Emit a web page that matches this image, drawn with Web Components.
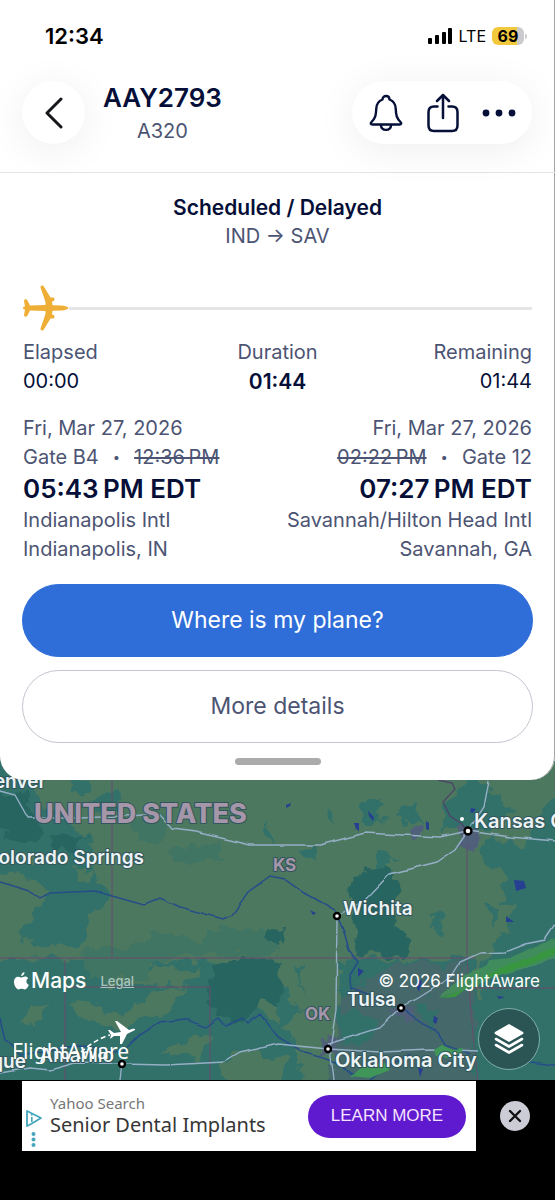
<!DOCTYPE html>
<html lang="en">
<head>
<meta charset="utf-8">
<meta name="viewport" content="width=device-width, initial-scale=1">
<title>AAY2793</title>
<style>
    html {
        --ink: #050f38;
        --muted: #4c5473;
        --blue: #2f6dd8;
        --line: #e5e5e5;
    }
    body {
        margin: 0;
        background: #000;
        color: var(--muted);
        font: 20px/29px Inter, "Liberation Sans", sans-serif;
    }
</style>
</head>
<body>
<flight-app>
    <flight-sheet slot="sheet">
        <status-bar time="12:34" network="LTE" battery="69"></status-bar>
        <top-bar>
            <span slot="title">AAY2793</span>
            <span slot="subtitle">A320</span>
        </top-bar>
        <flight-status>
            <span slot="state">Scheduled / Delayed</span>
            IND → SAV
        </flight-status>
        <flight-progress elapsed="00:00" duration="01:44" remaining="01:44"></flight-progress>
        <flight-ends>
            <flight-end date="Fri, Mar 27, 2026" gate="Gate B4" planned="12:36&#8201;PM" actual="05:43&#8201;PM EDT"
                        airport="Indianapolis Intl" city="Indianapolis, IN"></flight-end>
            <flight-end class="_arrival" date="Fri, Mar 27, 2026" gate="Gate 12" planned="02:22&#8201;PM" actual="07:27&#8201;PM EDT"
                        airport="Savannah/Hilton Head Intl" city="Savannah, GA"></flight-end>
        </flight-ends>
        <pill-button class="_primary">Where is my plane?</pill-button>
        <pill-button>More details</pill-button>
    </flight-sheet>
    <flight-map slot="map"></flight-map>
    <ad-banner slot="ad">
        <span slot="source">Yahoo Search</span>
        <span slot="headline">Senior Dental Implants</span>
        <span slot="action">LEARN MORE</span>
    </ad-banner>
</flight-app>

<script>
// common base: attach the shadow and put the template in
class BaseElement extends HTMLElement {
    constructor() {
        super();
        this.attachShadow({mode: "open"});
    }

    connectedCallback() {
        this.shadowRoot.innerHTML = this._template();
    }

    _attr(name) {
        return this.getAttribute(name) || "";
    }
}

class FlightApp extends BaseElement {
    _template() {
        return `
            <style>
                :host {
                    display: flex;
                    flex-direction: column;
                    min-height: 100vh;
                }
                ::slotted([slot="map"]) {
                    flex: 1;
                }
            </style>
            <slot name="sheet"></slot>
            <slot name="map"></slot>
            <slot name="ad"></slot>
        `;
    }
}

class FlightSheet extends BaseElement {
    _template() {
        return `
            <style>
                :host {
                    display: flex;
                    flex-direction: column;
                    position: relative;
                    z-index: 1;
                    background: #fff;
                    border-radius: 0 0 24px 24px;
                    box-shadow: inset -1px 0 #a5a5a5;
                    overflow: hidden;
                }
                .handle {
                    align-self: center;
                    width: 86px;
                    height: 7px;
                    margin: 15px 0;
                    border-radius: 4px;
                    background: #ababab;
                }
            </style>
            <slot></slot>
            <div class="handle"></div>
        `;
    }
}

class StatusBar extends BaseElement {
    _template() {
        return `
            <style>
                :host {
                    display: flex;
                    align-items: center;
                    justify-content: space-between;
                    height: 72px;
                    padding: 0 28px 0 45px;
                    color: #000;
                    font-size: 22px;
                    font-weight: 600;
                    line-height: 24px;
                }
                .right {
                    display: flex;
                    align-items: center;
                    gap: 6px;
                    font-size: 16px;
                    font-weight: 400;
                }
                .battery {
                    display: flex;
                    align-items: center;
                    gap: 1px;
                }
                .level {
                    width: 32px;
                    border-radius: 6px;
                    background: linear-gradient(90deg, #f2c93d 79%, #cbcace 79%);
                    font-weight: 700;
                    line-height: 18px;
                    text-align: center;
                }
                .tip {
                    width: 2px;
                    height: 5px;
                    border-radius: 0 2px 2px 0;
                    background: #cbcace;
                }
            </style>
            <span>${this._attr("time")}</span>
            <div class="right">
                <svg width="25" height="16" viewBox="0 0 25 16">
                    <rect x="0" y="10" width="4" height="6" rx="1"/>
                    <rect x="7" y="7" width="4" height="9" rx="1"/>
                    <rect x="14" y="4" width="4" height="12" rx="1"/>
                    <rect x="20" y="0" width="4" height="16" rx="1"/>
                </svg>
                <span>${this._attr("network")}</span>
                <div class="battery">
                    <div class="level">${this._attr("battery")}</div>
                    <div class="tip"></div>
                </div>
            </div>
        `;
    }
}

class TopBar extends BaseElement {
    _template() {
        return `
            <style>
                :host {
                    display: flex;
                    align-items: flex-start;
                    gap: 18px;
                    height: 91px;
                    padding: 9px 23px 0 22px;
                    border-bottom: 1px solid var(--line);
                }
                button {
                    display: grid;
                    place-items: center;
                    padding: 0;
                    border: 0;
                    background: none;
                    color: var(--ink);
                }
                .back, .actions {
                    height: 63px;
                    border-radius: 32px;
                    background: #fff;
                    box-shadow: 0 6px 40px rgba(0, 0, 0, .07);
                }
                .back {
                    width: 63px;
                    color: #16171b;
                }
                .names {
                    flex: 1;
                }
                .block {
                    display: inline-flex;
                    flex-direction: column;
                    align-items: center;
                }
                .title {
                    color: var(--ink);
                    font-size: 26px;
                    font-weight: 600;
                    line-height: 34px;
                }
                .subtitle {
                    line-height: 32px;
                }
                .actions {
                    display: flex;
                    align-items: center;
                    justify-content: space-between;
                    width: 148px;
                    padding: 0 16px;
                }
            </style>
            <button class="back" aria-label="Back">
                <svg width="20" height="32" viewBox="0 0 20 32" fill="none" stroke="currentColor" stroke-width="3" stroke-linecap="round" stroke-linejoin="round">
                    <path d="M17 2 L3 16 L17 30"/>
                </svg>
            </button>
            <div class="names">
                <div class="block">
                    <div class="title"><slot name="title"></slot></div>
                    <div class="subtitle"><slot name="subtitle"></slot></div>
                </div>
            </div>
            <div class="actions">
                <button aria-label="Alerts">
                    <svg width="36" height="38" viewBox="0 0 36 38" fill="none" stroke="currentColor" stroke-width="2.4" stroke-linejoin="round">
                        <path d="M14.5 5.5 C14.5 .8 21.5 .8 21.5 5.5 C25.5 7 27.5 10.2 27.7 14.5 C28 21.5 28.6 24 32.5 28 C33.8 29.4 33.3 30.5 31.5 30.5 L4.5 30.5 C2.7 30.5 2.2 29.4 3.5 28 C7.4 24 8 21.5 8.3 14.5 C8.5 10.2 10.500 7 14.5 5.5 Z"/>
                        <path d="M12.8 30.8 C13.5 37.5 22.5 37.5 23.2 30.8"/>
                    </svg>
                </button>
                <button aria-label="Share">
                    <svg width="34" height="40" viewBox="0 0 34 40" fill="none" stroke="currentColor" stroke-width="2.5" stroke-linecap="round" stroke-linejoin="round">
                        <path d="M11.5 13.5 H8 C4.5 13.5 2.5 15.5 2.5 19 V32.5 C2.5 36 4.5 38 8 38 H26 C29.5 38 31.5 36 31.5 32.5 V19 C31.5 15.5 29.5 13.5 26 13.5 H22.5"/>
                        <path d="M17 25 V2 M11 8 L17 2 L23 8"/>
                    </svg>
                </button>
                <button aria-label="More">
                    <svg width="34" height="8" viewBox="0 0 34 8" fill="currentColor">
                        <circle cx="4" cy="4" r="3.4"/><circle cx="17" cy="4" r="3.4"/><circle cx="30" cy="4" r="3.4"/>
                    </svg>
                </button>
            </div>
        `;
    }
}

class FlightStatus extends BaseElement {
    _template() {
        return `
            <style>
                :host {
                    display: block;
                    padding-top: 20px;
                    text-align: center;
                }
                .state {
                    color: var(--ink);
                    font-size: 21px;
                    font-weight: 600;
                }
            </style>
            <div class="state"><slot name="state"></slot></div>
            <slot></slot>
        `;
    }
}

class FlightProgress extends BaseElement {
    _template() {
        return `
            <style>
                :host {
                    display: block;
                    padding: 34px 23px 0;
                }
                .track {
                    display: flex;
                    align-items: center;
                }
                .rail {
                    flex: 1;
                    height: 3px;
                    background: var(--line);
                }
                dl {
                    display: grid;
                    grid-template-columns: 1fr 1fr 1fr;
                    margin: 7px 0 0;
                }
                dl div:nth-child(2) {
                    text-align: center;
                }
                dl div:nth-child(3) {
                    text-align: right;
                }
                dd {
                    margin: 0;
                    color: var(--ink);
                }
                dl div:nth-child(2) dd {
                    font-size: 21px;
                    font-weight: 600;
                }
            </style>
            <div class="track">
                <svg width="46" height="46" viewBox="0 0 46 46" fill="#efae35">
                    <path d="M0 23 C0 22 1 21.5 2 21.5 L1 16 C1 14 3.5 14 4.2 15 L7 20.5 L22.5 20 L22.500 17 L17.5 2.5 C17.5 0 20 0 20.800 1.5 L27.500 12.500 H30.5 C32 13 32 15.500 30.500 16 L29 16.500 L29.500 20.200 L38 20.4 C42 20.6 45.5 22 45.5 23 C45.5 24 42 25.4 38 25.6 L29.500 25.800 L29 29.500 L30.500 30 C32 30.500 32 33 30.500 33.500 H27.500 L20.800 44.500 C20 46 17.5 46 17.5 43.5 L22.5 29 L22.5 26 L7 25.5 L4.2 31 C3.5 32 1 32 1 30 L2 24.5 C1 24.5 0 24 0 23 Z"/>
                </svg>
                <div class="rail"></div>
            </div>
            <dl>
                <div><dt>Elapsed</dt><dd>${this._attr("elapsed")}</dd></div>
                <div><dt>Duration</dt><dd>${this._attr("duration")}</dd></div>
                <div><dt>Remaining</dt><dd>${this._attr("remaining")}</dd></div>
            </dl>
        `;
    }
}

class FlightEnds extends BaseElement {
    _template() {
        return `
            <style>
                :host {
                    display: flex;
                    justify-content: space-between;
                    padding: 18px 23px 7px;
                }
            </style>
            <slot></slot>
        `;
    }
}

class FlightEnd extends BaseElement {
    _template() {
        return `
            <style>
                :host {
                    display: block;
                    white-space: nowrap;
                }
                :host(._arrival) {
                    text-align: right;
                }
                .gate {
                    display: flex;
                    gap: 14px;
                }
                :host(._arrival) .gate {
                    flex-direction: row-reverse;
                }
                .dot {
                    font-size: 13px;
                }
                .actual {
                    color: var(--ink);
                    font-size: 26px;
                    font-weight: 600;
                    line-height: 34px;
                }
            </style>
            <div>${this._attr("date")}</div>
            <div class="gate">
                <span>${this._attr("gate")}</span>
                <span class="dot">•</span>
                <s>${this._attr("planned")}</s>
            </div>
            <div class="actual">${this._attr("actual")}</div>
            <div>${this._attr("airport")}</div>
            <div>${this._attr("city")}</div>
        `;
    }
}

class PillButton extends BaseElement {
    _template() {
        return `
            <style>
                :host {
                    display: block;
                    margin: 13px 22px 0;
                }
                button {
                    display: block;
                    width: 100%;
                    height: 73px;
                    border: 1px solid #c3c5cf;
                    border-radius: 37px;
                    background: #fff;
                    color: var(--muted);
                    font: 23px/29px Inter, "Liberation Sans", sans-serif;
                }
                :host(._primary) button {
                    border-color: var(--blue);
                    background: var(--blue);
                    color: #fff;
                }
            </style>
            <button><slot></slot></button>
        `;
    }
}

class FlightMap extends BaseElement {
    _template() {
        return `
            <style>
                :host {
                    display: grid;
                    position: relative;
                    min-height: 340px;
                    margin-top: -40px;
                    background: #4d7860;
                }
                .terrain {
                    position: absolute;
                    width: 100%;
                    height: 100%;
                }
                .over {
                    display: flex;
                    flex-direction: column;
                    justify-content: flex-end;
                    gap: 15px;
                    position: relative;
                    padding: 0 15px 10px 14px;
                    color: #fff;
                }
                .row {
                    display: flex;
                    align-items: center;
                    justify-content: space-between;
                    line-height: 24px;
                }
                .maps {
                    display: flex;
                    align-items: center;
                    gap: 2px;
                    font-size: 21px;
                    font-weight: 500;
                }
                a {
                    margin-left: 12px;
                    color: #a9c6bf;
                    font-size: 13px;
                    font-weight: 500;
                }
                .copy {
                    font-size: 17px;
                }
                .brand {
                    align-self: flex-start;
                }
                button {
                    display: grid;
                    place-items: center;
                    width: 62px;
                    height: 62px;
                    border: 1px solid #7fb0a8;
                    border-radius: 50%;
                    background: #2b5555;
                    color: #fff;
                }
            </style>
            <svg class="terrain" viewBox="0 740 555 340" preserveAspectRatio="xMidYMid slice">
                <defs>
                    <filter id="rough" x="-5%" y="-5%" width="110%" height="110%">
                        <feTurbulence type="fractalNoise" baseFrequency=".06" numOctaves="3" seed="4"/>
                        <feDisplacementMap in="SourceGraphic" scale="22" xChannelSelector="R" yChannelSelector="G"/>
                    </filter>
                    <filter id="bend">
                        <feTurbulence type="fractalNoise" baseFrequency=".05" numOctaves="1" seed="7"/>
                        <feDisplacementMap in="SourceGraphic" scale="4" xChannelSelector="R" yChannelSelector="G"/>
                    </filter>
                </defs>
                <!-- land cover -->
                <g filter="url(#rough)">
                    <path fill="#31706a" d="M-20 730 L0 760 L30 790 L60 815 L88 840 L95 880 L112 895 L90 915 L88 940 L60 945 L20 940 L30 920 L50 890 L30 880 L-20 870 Z"/>
                    <path fill="#4d7860" d="M-5 870 L20 875 L25 900 L18 950 L-20 950 Z M20 850 L40 858 L28 868 Z M70 870 L92 868 L88 885 Z M28 822 L38 826 L32 832 Z"/>
                    <path fill="#286561" d="M0 790 L25 795 L45 830 L35 845 L10 840 L-10 815 Z M50 835 L85 838 L80 850 L55 850 Z"/>
                    <path fill="#31706a" d="M72 783 L90 780 L86 797 L72 795 Z M85 802 L118 794 L120 808 L100 815 Z"/>
                    <path fill="#31706a" d="M-20 962 L120 958 L215 962 L230 990 L290 1030 L310 1100 L-20 1100 Z"/>
                    <path fill="#4d7860" d="M70 1000 L100 1005 L110 1015 L160 990 L190 985 L170 1010 L140 1022 L110 1030 L80 1020 Z M30 1005 L45 1008 L35 1025 L20 1028 Z M180 1040 L215 1035 L200 1060 L160 1055 Z M90 965 L200 968 L180 985 L110 985 Z M230 1050 L290 1060 L270 1090 L220 1080 Z"/>
                    <path fill="#3f7564" d="M150 930 L190 940 L240 925 L280 935 L280 955 L150 958 Z M80 950 L150 945 L150 980 L90 975 Z M130 820 L170 815 L165 835 L140 840 Z M170 850 L220 845 L225 860 L180 862 Z"/>
                    <path fill="#286561" d="M210 965 L255 955 L290 965 L290 1010 L265 1000 L245 1020 L215 1015 Z M265 930 L285 930 L282 948 L268 945 Z"/>
                    <path fill="#4d7860" d="M280 960 L335 960 L335 1060 L300 1040 L282 1000 Z"/>
                    <path fill="#286561" d="M355 870 L385 862 L400 880 L390 910 L412 945 L405 957 L360 955 L358 930 L350 905 Z"/>
                    <path fill="#31706a" d="M470 780 L500 795 L510 815 L480 830 L440 830 L445 805 Z M363 802 L385 802 L380 825 L362 825 Z M395 812 L415 805 L425 825 L405 820 Z M325 810 L332 806 L333 828 L327 822 Z M375 850 L395 855 L385 870 L372 865 Z M475 855 L490 835 L520 850 L535 820 L555 800 L575 810 L575 1090 L500 1090 L475 970 L495 950 L500 930 L485 905 L490 880 Z M500 850 L570 840 L575 960 L505 950 Z M340 960 L475 958 L475 1000 L340 1000 Z M260 830 L270 822 L272 848 L264 842 Z M278 985 L300 1010 L280 1030 Z M295 965 L302 970 L300 990 Z M435 912 L445 918 L440 932 L430 925 Z M300 850 L318 846 L315 860 L302 858 Z"/>
                    <path fill="#4d7860" d="M480 860 L505 870 L500 910 L480 900 Z M500 905 L515 900 L510 940 L495 930 Z M520 790 L545 800 L530 825 L510 815 Z"/>
                    <path fill="#44686a" d="M340 1000 L400 960 L470 965 L475 1090 L330 1090 Z"/>
                    <path fill="#31706a" d="M340 1010 L380 1020 L360 1045 L340 1040 Z M415 1000 L445 1010 L430 1030 Z M470 1000 L555 1000 L560 1090 L475 1090 Z"/>
                    <path fill="#51607a" d="M462 825 L478 826 L482 840 L470 850 L458 846 Z M411 826 L422 826 L424 835 L412 838 Z M398 1005 L415 1008 L408 1020 L395 1014 Z M322 1035 L340 1040 L338 1060 L322 1055 Z"/>
                </g>
                <!-- state lines -->
                <g fill="none" stroke="#654f6d" stroke-opacity=".8" stroke-width="1.3">
                    <path d="M112 740 V958 M0 958 H475 M65 960 V1080 M65 987 H210 V1080 M467 845 V958 L470 1000 L474 1045 L478 1080 M470 988 H555"/>
                    <path d="M438 780 L452 783 L455 789 L443 802 L450 816 L462 824 L467 831" stroke-opacity="1" stroke="#4d4468"/>
                </g>
                <!-- rivers and lakes -->
                <g fill="none" stroke="#254e88" stroke-width="1.5" filter="url(#bend)">
                    <path d="M0 882 L30 891 L40 898 L50 893 L95 891 L112 896 L144 905 L160 898 L180 907 L223 919 L232 915 L248 892 L270 876 L285 879 L305 893 L335 910 L345 935 L349 950 L358 962 L350 975 L352 988 L370 995 L400 1008 L420 1022 L436 1030 L445 1045 L470 1055"/>
                    <path d="M0 1018 L5 1040 L20 1055 L80 1045 L122 1052 L140 1035 L160 1022 L185 1019 L205 1027 L218 1018 L225 1026 L243 1018 L248 1024 L260 1014 L278 1037 L305 1053 L330 1060 L355 1075"/>
                    <path d="M410 1055 L390 1065 L370 1080 M515 1050 L530 1062 L555 1065"/>
                </g>
                <g fill="#263f91">
                    <path d="M286 805 l5 -2 l-1 3 l-4 2 z M354 823 l5 0 l0 8 l-3 -2 z M368 811 l6 6 l-1 4 l-4 -5 z M426 821 l3 2 l0 7 l-3 -1 z M471 808 l5 1 l-3 4 l-3 -1 z M514 880 l10 1 l2 7 l-10 3 z M506 916 l8 6 l-8 0 z M310 910 l6 3 l-3 2 z M358 968 l6 3 l-6 6 z M434 1016 l4 2 l-2 6 l-3 -2 z M418 979 l4 2 l-3 11 l-2 -4 z M418 1067 l5 2 l-3 8 z M497 996 l8 1 l-6 2 z"/>
                </g>
                <!-- roads -->
                <g fill="none" stroke="#94aec6" stroke-width="1.4" filter="url(#bend)">
                    <path d="M0 791 L15 795 L28 818 L80 818 L145 815 L160 815 L173 829 L195 832 L230 840 L250 845 L320 845 L365 833 L440 837 L468 831 L510 837 L555 841"/>
                    <path d="M489 780 L484 807 L468 831 L455 850 L437 862 L390 874 L365 900 L337 916 L336 1010 L330 1049 L334 1080"/>
                    <path d="M0 1073 L30 1068 L50 1070 L75 1063 L122 1064 L165 1065 L225 1062 L240 1053 L278 1044 L328 1049 L380 1052 L430 1050 L478 1052"/>
                    <path d="M328 1044 L380 1028 L401 1008 L420 997 L450 978 L460 962 L480 953 L505 952 L525 944 L545 940 L555 925 M122 1064 L120 1080"/>
                </g>
                <!-- radar echo -->
                <g filter="url(#bend)">
                    <path fill="#439358" fill-opacity=".8" d="M438 998 L450 988 L465 975 L488 965 L490 960 L510 958 L530 948 L558 938 V958 L520 970 L500 975 L470 988 Z"/>
                    <path fill="#37963f" d="M478 980 L505 966 L530 957 L558 946 V953 L525 966 L500 974 Z M440 998 L460 991 L475 982 L455 997 Z"/>
                    <path fill="#3f9558" d="M350 1076 L360 1068 L385 1062 L390 1070 L370 1078 Z M434 1050 L442 1045 L452 1050 L462 1049 L458 1058 L436 1056 Z"/>
                </g>
                <!-- labels -->
                <g font-family='Inter, "Liberation Sans", sans-serif' paint-order="stroke" stroke="#31555c" stroke-width="2" stroke-linejoin="round">
                    <g fill="#a596aa" font-weight="800">
                        <text x="34" y="823" font-size="27">UNITED STATES</text>
                        <g font-size="17" font-weight="700">
                            <text x="273" y="871">KS</text>
                            <text x="305" y="1020">OK</text>
                        </g>
                    </g>
                    <g fill="#ebf3f5" font-size="19" font-weight="600">
                        <text x="46" y="788" text-anchor="end">Denver</text>
                        <text x="144" y="864" text-anchor="end">Colorado Springs</text>
                        <text x="343" y="915">Wichita</text>
                        <text x="474" y="828" font-size="20">Kansas City</text>
                        <text x="347" y="1006">Tulsa</text>
                        <text x="335" y="1067" font-size="20">Oklahoma City</text>
                        <text x="114" y="1062" text-anchor="end" font-weight="500">Amarillo</text>
                        <text x="26" y="1068" text-anchor="end">Albuquerque</text>
                    </g>
                </g>
                <g fill="#fff" stroke="#000" stroke-width="2.4">
                    <circle cx="468" cy="831" r="3.5"/>
                    <circle cx="337" cy="916" r="3"/>
                    <circle cx="401" cy="1008" r="3"/>
                    <circle cx="328" cy="1049" r="3"/>
                    <circle cx="122" cy="1064" r="3"/>
                    <circle cx="462" cy="819" r="2" stroke="none"/>
                </g>
            </svg>
            <div class="over">
                <div class="row">
                    <div class="maps">
                        <svg width="15" height="18" viewBox="0 0 15 18" fill="#fff">
                            <path d="M10.5 0 C10.7 2 9 4 7.2 4 C7 2.2 8.7 .3 10.5 0 Z M14.2 6.2 C11.5 8 12 11.5 14.8 12.7 C14 15 12.5 17.5 10.8 17.5 C9.5 17.5 9 16.8 7.7 16.8 C6.3 16.8 5.8 17.5 4.6 17.5 C2.5 17.5 0 13.5 0 10 C0 6.5 2.2 4.7 4.3 4.7 C5.7 4.7 6.8 5.6 7.6 5.6 C8.4 5.6 9.6 4.6 11.2 4.6 C12.3 4.6 13.5 5.2 14.2 6.2 Z"/>
                        </svg>
                        <span>Maps</span>
                        <a href="#legal">Legal</a>
                    </div>
                    <span class="copy">© 2026 FlightAware</span>
                </div>
                <div class="row">
                    <svg class="brand" width="124" height="60" viewBox="0 0 124 60" fill="#fff">
                        <path d="M67 44 C76 36 86 30 96 27" fill="none" stroke="#fff" stroke-width="1.6" stroke-dasharray="5 3"/>
                        <path d="M94 22 L96 22 L100 25 L107 24 L101 13 L103 13 L115 22 L118 21 C122 20 122 22 119 23 L113 26 L108 36 L106 36 L106 28 L100 28 L96 31 L97 27 Z"/>
                        <text x="-2" y="51" font-family='"Noto Sans", sans-serif' font-size="21">FlightAware</text>
                    </svg>
                    <button aria-label="Map layers">
                        <svg width="30" height="32" viewBox="0 0 30 32" fill="currentColor">
                            <path d="M15 1 L29 9 Q30 10 29 11 L15 19 L1 11 Q0 10 1 9 Z"/>
                            <path d="M2 16 L15 23.5 L28 16 M2 22 L15 29.5 L28 22" fill="none" stroke="currentColor" stroke-width="2.6" stroke-linecap="round" stroke-linejoin="round"/>
                        </svg>
                    </button>
                </div>
            </div>
        `;
    }
}

class AdBanner extends BaseElement {
    _template() {
        return `
            <style>
                :host {
                    display: flex;
                    align-items: flex-start;
                    gap: 24px;
                    height: 119px;
                    padding: 1px 25px 0 22px;
                    background: #000;
                }
                .card {
                    display: flex;
                    flex: 1;
                    align-items: center;
                    gap: 7px;
                    height: 70px;
                    padding: 0 10px 0 3px;
                    background: #fff;
                    font-family: "Noto Sans", "Open Sans", sans-serif;
                }
                .choices {
                    align-self: flex-end;
                }
                .text {
                    flex: 1;
                    padding-bottom: 4px;
                    line-height: 22px;
                }
                .source {
                    color: #767676;
                    font-size: 15px;
                }
                .headline {
                    color: #363636;
                }
                .go {
                    width: 158px;
                    height: 43px;
                    padding: 0;
                    border: 0;
                    border-radius: 22px;
                    background: #5f19cf;
                    color: #f6e3ff;
                    font: 17px/22px "Liberation Sans", sans-serif;
                }
                .close {
                    display: grid;
                    place-items: center;
                    width: 30px;
                    height: 30px;
                    margin-top: 20px;
                    padding: 0;
                    border: 0;
                    border-radius: 50%;
                    background: #cbccd6;
                }
            </style>
            <div class="card">
                <svg class="choices" width="18" height="42" viewBox="0 0 18 42" fill="#45a5bd">
                    <path d="M2 2 L16 9 L6 15 L2 17 Z" fill="none" stroke="#45a5bd" stroke-width="1.8" stroke-linejoin="round"/>
                    <rect x="6" y="8" width="1.6" height="5"/>
                    <rect x="6" y="5" width="1.6" height="1.6"/>
                    <circle cx="8.5" cy="25" r="2"/><circle cx="8.5" cy="30.5" r="2"/><circle cx="8.5" cy="36" r="2"/>
                </svg>
                <div class="text">
                    <div class="source"><slot name="source"></slot></div>
                    <div class="headline"><slot name="headline"></slot></div>
                </div>
                <button class="go"><slot name="action"></slot></button>
            </div>
            <button class="close" aria-label="Close ad">
                <svg width="14" height="14" viewBox="0 0 14 14" stroke="#111" stroke-width="2.4" stroke-linecap="round">
                    <path d="M2 2 L12 12 M12 2 L2 12"/>
                </svg>
            </button>
        `;
    }
}

customElements.define("flight-app", FlightApp);
customElements.define("flight-sheet", FlightSheet);
customElements.define("status-bar", StatusBar);
customElements.define("top-bar", TopBar);
customElements.define("flight-status", FlightStatus);
customElements.define("flight-progress", FlightProgress);
customElements.define("flight-ends", FlightEnds);
customElements.define("flight-end", FlightEnd);
customElements.define("pill-button", PillButton);
customElements.define("flight-map", FlightMap);
customElements.define("ad-banner", AdBanner);
</script>
</body>
</html>
